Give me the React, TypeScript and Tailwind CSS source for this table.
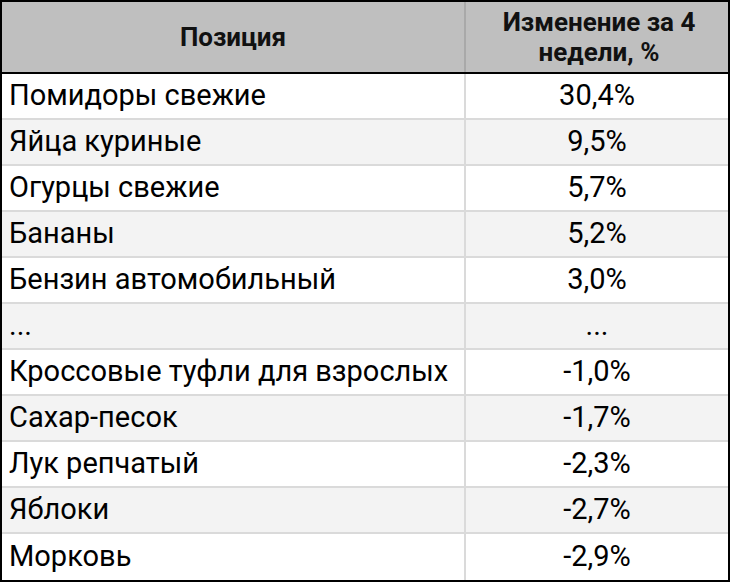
const ROWS: [string, string][] = [
  ["Помидоры свежие", "30,4%"],
  ["Яйца куриные", "9,5%"],
  ["Огурцы свежие", "5,7%"],
  ["Бананы", "5,2%"],
  ["Бензин автомобильный", "3,0%"],
  ["...", "..."],
  ["Кроссовые туфли для взрослых", "-1,0%"],
  ["Сахар-песок", "-1,7%"],
  ["Лук репчатый", "-2,3%"],
  ["Яблоки", "-2,7%"],
  ["Морковь", "-2,9%"],
];

export default function App() {
  return (
    <div className="w-[730px] h-[582px] bg-white font-['Roboto',sans-serif] text-black">
      <div className="border-2 border-black">
        {/* header */}
        <div className="grid grid-cols-[464px_1fr] h-[72px] bg-[#bfbfbf] border-b-2 border-black font-bold text-[26px] leading-[30px] text-[#111]">
          <div className="flex items-center justify-center border-r-2 border-[#a9a9a9]">Позиция</div>
          <div className="flex items-center justify-center text-center pl-1">
            Изменение за 4<br />недели, %
          </div>
        </div>

        {/* rows */}
        {ROWS.map(([name, value], i) => (
          <div
            key={name + i}
            className={`grid grid-cols-[464px_1fr] h-[46px] text-[29px] ${
              i % 2 === 1 ? "bg-[#f3f3f3]" : "bg-white"
            } ${i < ROWS.length - 1 ? "border-b-2 border-[#dadada]" : "h-[44px]"}`}
          >
            <div className="flex items-center pl-[7px] border-r-2 border-[#dadada] whitespace-nowrap">{name}</div>
            <div className="flex items-center justify-center">{value}</div>
          </div>
        ))}
      </div>
    </div>
  );
}
